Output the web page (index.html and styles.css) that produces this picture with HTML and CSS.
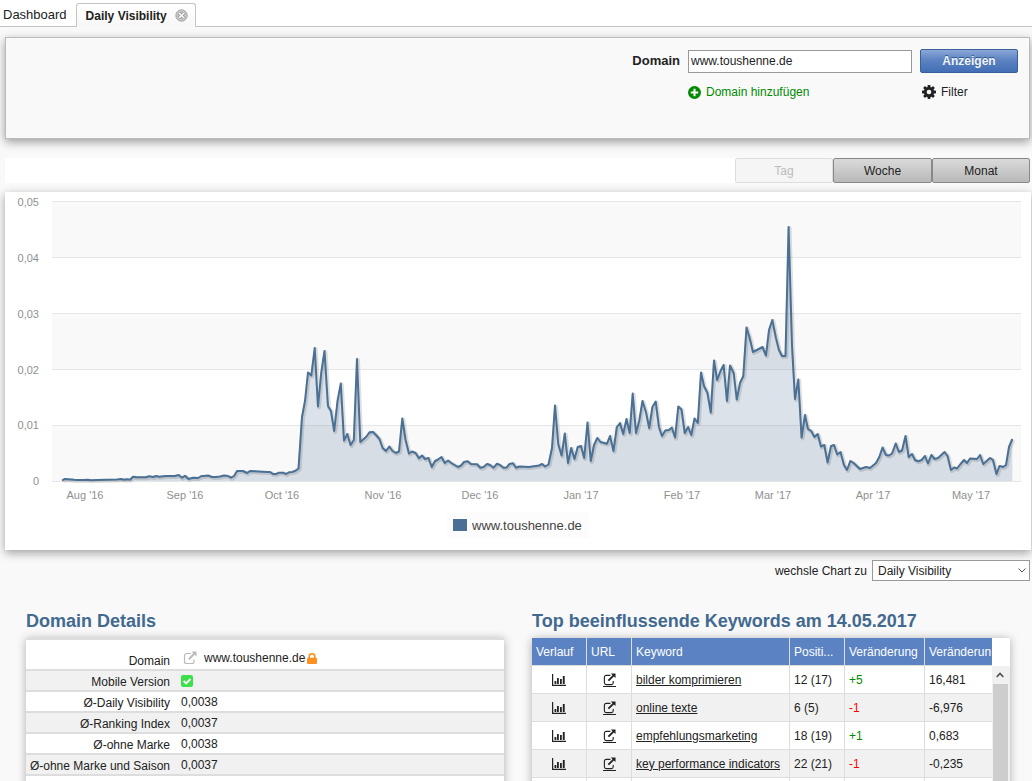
FILE: index.html
```html
<!DOCTYPE html>
<html lang="de">
<head>
<meta charset="utf-8">
<title>Daily Visibility</title>
<link rel="stylesheet" href="styles.css">
</head>
<body>
<svg class="sprite" aria-hidden="true">
  <symbol id="ext" viewBox="0 0 14 14">
    <path d="M8 2.500H3.500a2 2 0 0 0-2 2v6a2 2 0 0 0 2 2H9a2 2 0 0 0 2-2V8.500" fill="none" stroke="currentColor" stroke-width="1.200"/>
    <path d="M8.500.500H13.500V5.500L11.700 3.700 6.500 8.900 5.100 7.500 10.300 2.300z" fill="currentColor"/>
  </symbol>
  <symbol id="bars" viewBox="0 0 14 12">
    <path d="M.6 0V11.400H14" fill="none" stroke="currentColor" stroke-width="1.200"/>
    <path d="M2.500 7h1.800v3H2.500zM5 4h1.800v6H5zM8 5h1.800v5H8zM10.800 2h1.900v8h-1.900z" fill="currentColor"/>
  </symbol>
</svg>

<nav class="tabs">
  <a class="tab" href="#">Dashboard</a>
  <div class="tab tab-active">
    <a href="#">Daily Visibility</a>
    <button class="close" type="button" aria-label="Tab schließen">
      <svg viewBox="0 0 13 13" width="13" height="13"><circle cx="6.500" cy="6.500" r="5.700" fill="#c4c4c4" stroke="#a8a8a8"/><path d="M4 4l5 5M9 4L4 9" stroke="#888" stroke-width="2.800"/><path d="M4 4l5 5M9 4L4 9" stroke="#fff" stroke-width="1.600"/></svg>
    </button>
  </div>
</nav>

<main class="page">
  <form class="search">
    <label class="search-label" for="domain">Domain</label>
    <input class="search-input" id="domain" type="text" value="www.toushenne.de">
    <button class="primary" type="button">Anzeigen</button>
    <a class="add" href="#"><svg viewBox="0 0 14 14" width="13" height="13"><circle cx="7" cy="7" r="7" fill="#008a00"/><path d="M7 3v8M3 7h8" stroke="#fff" stroke-width="2.200"/></svg>Domain hinzufügen</a>
    <a class="filter" href="#"><svg viewBox="0 0 14 14" width="14" height="14"><g fill="#222"><rect x="5.600" y="0" width="2.800" height="14" rx=".4"/><rect x="5.600" y="0" width="2.800" height="14" rx=".4" transform="rotate(45 7 7)"/><rect x="5.600" y="0" width="2.800" height="14" rx=".4" transform="rotate(90 7 7)"/><rect x="5.600" y="0" width="2.800" height="14" rx=".4" transform="rotate(135 7 7)"/><circle cx="7" cy="7" r="5.200"/></g><circle cx="7" cy="7" r="2.300" fill="#f9f9f9"/></svg>Filter</a>
  </form>

  <div class="range">
    <button class="range-btn" type="button" disabled>Tag</button>
    <button class="range-btn range-mid" type="button">Woche</button>
    <button class="range-btn" type="button">Monat</button>
  </div>

  <section class="chart">
    <svg class="chart-svg" viewBox="5 192 1026 358" role="img" aria-label="Daily Visibility www.toushenne.de">
      <path d="M52 202H1021V257H52zM52 314H1021V369H52zM52 426H1021V481H52z" fill="#f9f9f9"/>
      <path d="M52 201.500H1021M52 257.500H1021M52 313.500H1021M52 369.500H1021M52 425.500H1021M52 481.500H1021" stroke="#e6e6e6"/>
      <g class="axis" text-anchor="end">
        <text x="39" y="206">0,05</text><text x="39" y="262">0,04</text><text x="39" y="318">0,03</text><text x="39" y="374">0,02</text><text x="39" y="429">0,01</text><text x="39" y="485">0</text>
      </g>
      <g class="axis" text-anchor="middle">
        <text x="85" y="499">Aug '16</text><text x="185" y="499">Sep '16</text><text x="282" y="499">Oct '16</text><text x="383" y="499">Nov '16</text><text x="480" y="499">Dec '16</text><text x="581" y="499">Jan '17</text><text x="682" y="499">Feb '17</text><text x="773" y="499">Mar '17</text><text x="873" y="499">Apr '17</text><text x="971" y="499">May '17</text>
      </g>
      <path class="area" id="area"/>
      <path class="line-shadow" id="line-shadow"/>
      <path class="line" id="line" d="M62 480.500 64.500 479 68 479.300 74 479.800 78 480 84 480 87.500 479.700 91 480.300 97 480 107 479.800 117 479.500 121 479 124 479.800 127 479.300 130 479.700 133 476.700 137 477.300 146 477.300 149 476.300 153 477 156 476 159 476.700 166 476 175 476 178.500 475 182 477.700 185 475.800 188.500 479 193 477.800 198 478 201.500 476 204 476 208 475.500 212 477 216 477 220 476.500 224 475.500 228 476 231 477.700 234 476 237 471 243 471 247 473 250 471 267 472 270 472 273 474 276 474 279 472.700 283 472.700 286 474 289 472.300 292 472 295 471 298.500 468.500
        302 417 305 401 308 372.500 311.300 375.500 314.700 348 318 406.500 321.200 373 324.500 351 328 406 331 411 334.200 431 337.500 401 340.800 383.500 344 440.500 347.300 434 350.600 445 353.800 440 357 359 360.300 442 366 437 369.500 432.300 373 432 376 435 379.500 439 382.700 448 386 451 389.300 446.500 392.600 451 396 453 399 451.500 402.300 418.500 405.600 440 409 453.500 412 451.500 415.600 453 419 458.300 422 455.500 425 459 428.500 458 431.800 467 435 461 438 459.500 441.500 457 444.800 463 448 460.500 451.300 463 458 467 461 465.500 464 462 467.500 461.300 471 464 477 464.200 480.300 467.700 483.500 467 487 464 490 465 493.600 467.700 496.800 463.800 500 465 503.500 467.700 506.500 467.500 509.500 464 513 463.300 516 467.700 519 466.500 529 467 539 465.500 542 464 545 466.500 548.500 464.500
        552 448 555 405.500 558.300 444 561.600 455.500 564.800 433.500 568 463 571.200 448 574.500 459 577.700 447 581 446 584.200 458 587.500 422.500 590.800 461 594 445 597.300 438 600.500 442 607 443.700 610 436 613.500 451 616.800 427 620 423 623.200 434 626.500 419 629.700 433 632.700 393.500 636 433 639.200 421 642.500 401 646 412 649.200 428 652.400 407 655.700 401.500 659 427 662 436 665.300 430.500 669 430 671.800 427.500 675.100 437.500 678.300 406.500 681.500 409.500 684.800 433 688.100 427 691.300 435 694.500 418.500 697.800 423 701 372.500 704 386 707.500 393 710.800 412.500 714 360.500 717.200 380 720.500 371 723.600 365 727 401 730 365.500 733.700 373 736.800 399.500 740 383 743.300 376 746.500 327.500 749.700 338 753 352 762.500 347 766 355.500 769 330 772.300 320 776 338 779 350 782 356 785.500 356
        788.600 227 792 345 795 399 798.300 379.500 801.600 437.500 805 415 808 429 811.200 431 814.500 437 817.700 434 821 446.500 824.300 445 827.600 462.500 831 446 834 445 837.300 454.500 840.500 452 844 465 847 470 850.300 461 853.600 463 860 469 866 467 870 468 876 463 879.300 457 882.500 447.500 886 455 889 455.500 892 453.500 895.700 443.500 899 452 902 450.500 905.500 436 908.700 457 912 454 915 460 918.300 461.300 921.600 460 925 456 928 463.500 931.300 455 934.600 459 938 458 944.500 452 947.600 456 951 470 954 467.500 957 468.500 960.500 464 964 460 967 463 970 458.500 977 459 980 455 983.300 464 990 458 993 460 996.500 474 999.500 466 1003 467 1006 465 1009 447 1012.300 439"/>
      <rect x="447" y="512" width="142" height="26" fill="#fcfcfc"/>
      <rect x="453" y="519" width="14" height="12" fill="#4a7095"/>
      <text class="legend" x="472" y="530">www.toushenne.de</text>
    </svg>
  </section>

  <div class="switch">
    <label for="chart-type">wechsle Chart zu</label>
    <span class="select-wrap">
      <select id="chart-type" class="select"><option>Daily Visibility</option></select>
      <svg class="chevron" viewBox="0 0 8 5" width="8" height="5"><path d="M.5.500 4 4 7.500.500" fill="none" stroke="#555"/></svg>
    </span>
  </div>

  <div class="columns">
    <section>
      <h2 class="title">Domain Details</h2>
      <table class="details">
        <tr class="first"><th>Domain</th><td><span class="domain"><a class="muted" href="#" aria-label="Öffnen"><svg width="14" height="14"><use href="#ext"/></svg></a>www.toushenne.de<svg class="lock" viewBox="0 0 10 11" width="10" height="11"><path d="M2.200 5V3.500a2.800 2.800 0 0 1 5.600 0V5" fill="none" stroke="#ff9020" stroke-width="1.600"/><rect y="4.800" width="10" height="6.200" rx="1" fill="#ff9020"/></svg></span></td></tr>
        <tr><th>Mobile Version</th><td><svg class="check" viewBox="0 0 12 12" width="12" height="12"><rect width="12" height="12" rx="2" fill="#3be04a"/><path d="M2.700 6l2.400 2.500L9.500 4" fill="none" stroke="#fff" stroke-width="1.900"/></svg></td></tr>
        <tr><th>Ø-Daily Visibility</th><td>0,0038</td></tr>
        <tr><th>Ø-Ranking Index</th><td>0,0037</td></tr>
        <tr><th>Ø-ohne Marke</th><td>0,0038</td></tr>
        <tr><th>Ø-ohne Marke und Saison</th><td>0,0037</td></tr>
        <tr><th></th><td></td></tr>
      </table>
    </section>
    <section>
      <h2 class="title">Top beeinflussende Keywords am 14.05.2017</h2>
      <div class="grid">
        <div class="grid-main">
          <table class="keywords">
            <colgroup><col class="c-trend"><col class="c-url"><col><col class="c-pos"><col class="c-change"><col class="c-last"></colgroup>
            <thead><tr><th>Verlauf</th><th>URL</th><th>Keyword</th><th>Positi...</th><th>Veränderung</th><th>Veränderun</th></tr></thead>
            <tbody>
              <tr><td class="ico"><svg width="14" height="12"><use href="#bars"/></svg></td><td class="ico"><a href="#" aria-label="URL"><svg width="13" height="13"><use href="#ext"/></svg></a></td><td><a class="kw" href="#">bilder komprimieren</a></td><td>12 (17)</td><td class="up">+5</td><td>16,481</td></tr>
              <tr><td class="ico"><svg width="14" height="12"><use href="#bars"/></svg></td><td class="ico"><a href="#" aria-label="URL"><svg width="13" height="13"><use href="#ext"/></svg></a></td><td><a class="kw" href="#">online texte</a></td><td>6 (5)</td><td class="down">-1</td><td>-6,976</td></tr>
              <tr><td class="ico"><svg width="14" height="12"><use href="#bars"/></svg></td><td class="ico"><a href="#" aria-label="URL"><svg width="13" height="13"><use href="#ext"/></svg></a></td><td><a class="kw" href="#">empfehlungsmarketing</a></td><td>18 (19)</td><td class="up">+1</td><td>0,683</td></tr>
              <tr><td class="ico"><svg width="14" height="12"><use href="#bars"/></svg></td><td class="ico"><a href="#" aria-label="URL"><svg width="13" height="13"><use href="#ext"/></svg></a></td><td><a class="kw" href="#">key performance indicators</a></td><td>22 (21)</td><td class="down">-1</td><td>-0,235</td></tr>
              <tr><td></td><td></td><td></td><td></td><td></td><td></td></tr>
            </tbody>
          </table>
        </div>
        <div class="scroll">
          <svg class="scroll-up" viewBox="0 0 8 6" width="8" height="6"><path d="M.700 5 4 1.500 7.300 5" fill="none" stroke="#505050" stroke-width="1.700"/></svg>
          <div class="thumb"></div>
        </div>
      </div>
    </section>
  </div>
</main>
<script src="chart.js"></script>
</body>
</html>
```

FILE: chart.js
```js
// The filled area and the shadow follow the same points as the line.
const points = document.getElementById('line').getAttribute('d');
document.getElementById('line-shadow').setAttribute('d', points);
document.getElementById('area').setAttribute('d', points + 'V481H62z');
```

FILE: styles.css
```css
* { box-sizing: border-box; }
body {
  margin: 0;
  height: 100vh;
  overflow: hidden;
  background: #f9f9f9;
  color: #222;
  font: 12px/16px "Liberation Sans", Arial, sans-serif;
}
a { color: inherit; text-decoration: none; }
button, input, select { font: inherit; color: inherit; }
.sprite { display: none; }

.tabs {
  display: flex;
  align-items: flex-end;
  height: 27px;
  background: #fff;
  border-bottom: 1px solid #c4c4c4;
}
.tab { padding: 0 9px 3px 3px; font-size: 13px; }
.tab-active {
  display: flex;
  align-items: center;
  gap: 8px;
  height: 24px;
  margin-bottom: -1px;
  padding: 0 7px 0 9px;
  border: 1px solid #c4c4c4;
  border-bottom: 0;
  border-radius: 3px 3px 0 0;
  background: linear-gradient(#fff, #f7f7f7);
  font-size: 12px;
  font-weight: bold;
}
.close { display: flex; padding: 0; border: 0; background: none; }

.page { padding: 10px 1px 0 5px; }

.search {
  display: grid;
  grid-template-columns: auto 224px 98px;
  justify-content: end;
  align-content: start;
  align-items: center;
  gap: 11px 8px;
  min-height: 102px;
  margin-right: 1px;
  padding: 11px 11px 0;
  border: 1px solid #bbb;
  background: #f9f9f9;
  box-shadow: 0 3px 9px rgba(0, 0, 0, .38);
}
.search-label { font-size: 13px; font-weight: bold; }
.search-input {
  width: 100%;
  height: 23px;
  padding: 0 2px;
  border: 1px solid #999;
  background: #fff;
}
.primary {
  height: 24px;
  border: 1px solid #3a609c;
  border-radius: 2px;
  background: linear-gradient(#8ba7d8, #5d83c2 45%, #426fb5);
  color: #f2f5fb;
  font-weight: bold;
  text-shadow: 0 -1px 0 #2e5590;
}
.add, .filter { display: flex; align-items: center; gap: 5px; }
.add { grid-column: 2; color: #008a00; }
.filter { padding-left: 2px; }

.range {
  display: flex;
  justify-content: flex-end;
  height: 25px;
  margin: 19px 1px 9px 0;
  background: #fff;
}
.range-btn {
  width: 98px;
  border: 1px solid #888;
  border-radius: 2px;
  background: linear-gradient(#dadada, #b9b9b9);
}
.range-mid { width: 99px; }
.range-btn:disabled {
  border-color: #ddd;
  background: #f5f5f5;
  color: #bbb;
}

.chart { background: #fff; box-shadow: 0 3px 9px rgba(0, 0, 0, .36); }
.chart-svg { display: block; width: 100%; height: auto; }
.axis { fill: #909090; font-size: 11px; }
.legend { fill: #444; font-size: 13px; }
.area { fill: #4a7095; fill-opacity: .2; }
.line, .line-shadow { fill: none; stroke-linejoin: round; }
.line { stroke: #4a7095; stroke-width: 2; }
.line-shadow { stroke: #000; stroke-opacity: .12; stroke-width: 4; transform: translate(1px, 1px); }

.switch {
  display: flex;
  justify-content: flex-end;
  align-items: center;
  gap: 5px;
  margin: 10px 1px 0 0;
}
.select-wrap { position: relative; width: 158px; }
.select {
  display: block;
  width: 100%;
  height: 21px;
  padding: 0 5px;
  border: 1px solid #999;
  border-radius: 0;
  background: #fff;
  appearance: none;
}
.chevron { position: absolute; top: 8px; right: 4px; pointer-events: none; }

.columns {
  display: grid;
  grid-template-columns: 1fr 1fr;
  gap: 28px;
  padding: 30px 21px 0;
}
.title { margin: 0 0 6px; color: #42698f; font-size: 18px; line-height: 21px; }

.details {
  width: 100%;
  border-collapse: collapse;
  background: #fff;
  box-shadow: 0 1px 9px rgba(0, 0, 0, .3);
}
.details tr { height: 21px; border-top: 2px solid #ddd; }
.details tr:nth-child(even) { background: #f1f1f1; }
.details .first { height: 31px; }
.details th {
  width: 144px;
  padding: 2px 0 0;
  font-weight: normal;
  text-align: right;
  vertical-align: bottom;
  white-space: nowrap;
}
.details td { padding: 0 0 1px 11px; vertical-align: bottom; }
.domain { display: flex; align-items: center; gap: 2px; padding: 0 0 2px 2px; }
.muted { display: flex; margin-right: 5px; color: #bbb; }
.check { display: block; margin-bottom: 2px; }

.grid { display: flex; background: #fff; box-shadow: 0 1px 9px rgba(0, 0, 0, .3); }
.grid-main { flex: 1; min-width: 0; overflow: hidden; }
.keywords { width: 100%; table-layout: fixed; border-collapse: separate; border-spacing: 0; }
.c-trend { width: 55px; }
.c-url { width: 45px; }
.c-pos { width: 55px; }
.c-change { width: 80px; }
.c-last { width: 67px; }
.keywords th, .keywords td {
  height: 28px;
  padding: 0 0 0 4px;
  border-right: 1px solid #ddd;
  border-bottom: 1px solid #ddd;
  text-align: left;
  white-space: nowrap;
}
.keywords th { background: #5b82c3; color: #fff; font-weight: normal; }
.keywords th:last-child, .keywords td:last-child { border-right: 0; }
.keywords tbody tr:nth-child(even) { background: #f1f1f1; }
.keywords .ico { padding: 0; text-align: center; }
.ico svg { display: block; margin: 0 auto; }
.ico a { display: inline-block; border-bottom: 1px solid #222; vertical-align: middle; }
.kw { text-decoration: underline; }
.up { color: #008a00; }
.keywords .down { color: #f00; }
.scroll {
  display: flex;
  flex-direction: column;
  align-items: center;
  width: 18px;
  padding: 28px 2px 0 0;
  background: linear-gradient(#fff 28px, #f0f0f0 28px);
}
.scroll-up { flex: none; margin: 6px 0; }
.thumb { flex: 1; width: 15px; background: #cdcdcd; }
```
